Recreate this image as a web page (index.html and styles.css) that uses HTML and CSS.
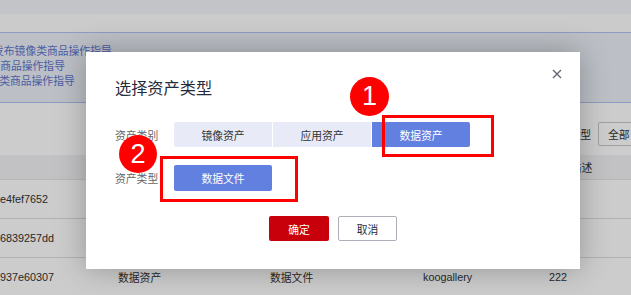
FILE: index.html
```html
<!DOCTYPE html>
<html lang="zh-CN">
<head>
  <meta charset="UTF-8" />
  <meta name="viewport" content="width=device-width, initial-scale=1.0" />
  <title>选择资产类型</title>
  <link rel="stylesheet" href="styles.css">
</head>
<body>
  <div class="page">
    <div class="topbar"></div>
    <div class="crumb"></div>

    <div class="notice">
      <p class="notice-line first">发布镜像类商品操作指导</p>
      <p class="notice-line second">发布应用商品操作指导</p>
      <p class="notice-line third">发布数据类商品操作指导</p>
    </div>

    <div class="filter">
      <span class="filter-label">资产类型</span>
      <span class="filter-select">全部</span>
    </div>

    <div class="grid">
      <div class="grid-row head">
        <span></span><span>资产类别</span><span>资产类型</span><span>发布者</span><span>资产描述</span>
      </div>
      <div class="grid-row">
        <span>e4fef7652</span><span>数据资产</span><span>数据文件</span><span>koogallery</span><span>111</span>
      </div>
      <div class="grid-row">
        <span>6839257dd</span><span>数据资产</span><span>数据文件</span><span>koogallery</span><span>xxxxy</span>
      </div>
      <div class="grid-row">
        <span>937e60307</span><span>数据资产</span><span>数据文件</span><span>koogallery</span><span>222</span>
      </div>
    </div>
  </div>

  <div class="mask"></div>

  <div class="dialog">
    <h2 class="dialog-title">选择资产类型</h2>
    <span class="dialog-close">
      <svg width="10" height="10" viewBox="0 0 10 10"><path d="M1 1L9 9M9 1L1 9" stroke="#5e6370" stroke-width="1.3" fill="none"/></svg>
    </span>

    <div class="field-row">
      <span class="field-label">资产类别</span>
      <div class="seg">
        <span class="seg-item">镜像资产</span>
        <span class="seg-item">应用资产</span>
        <span class="seg-item active">数据资产</span>
      </div>
    </div>

    <div class="field-row second-row">
      <span class="field-label">资产类型</span>
      <div class="seg">
        <span class="seg-item active tall">数据文件</span>
      </div>
    </div>

    <div class="dialog-footer">
      <button class="btn btn-ok">确定</button>
      <button class="btn btn-cancel">取消</button>
    </div>
  </div>

  <!-- annotations drawn over the screenshot -->
  <span class="mark-circle one">1</span>
  <span class="mark-box one"></span>
  <span class="mark-circle two">2</span>
  <span class="mark-box two"></span>
</body>
</html>
```

FILE: styles.css
```css
* {
  box-sizing: border-box;
}

body {
  margin: 0;
  width: 631px;
  height: 295px;
  overflow: hidden;
  position: relative;
  font-family: 'Liberation Sans', 'Noto Sans CJK SC', sans-serif;
  font-size: 10.8px;
  color: #333;
  background: #fff;
}

.page {
  width: 631px;
}

.topbar {
  height: 14px;
  background: #f4f5f9;
}

.crumb {
  height: 18px;
  background: #fefefe;
}

.notice {
  height: 71px;
  background: #ebf0f8;
  border-top: 1px solid #b3c2f2;
  border-bottom: 1px solid #b3c2f2;
  padding-top: 11px;
}

.notice-line {
  margin: 0;
  line-height: 15px;
  color: #6074cc;
  white-space: nowrap;
}

.notice-line.first {
  margin-left: -7px;
}

.notice-line.second {
  margin-left: -43px;
}

.notice-line.third {
  margin-left: -44px;
}

.filter {
  height: 52px;
  display: flex;
  align-items: center;
  justify-content: flex-end;
  padding-top: 10px;
  gap: 7px;
}

.filter-label {
  color: #333;
}

.filter-select {
  width: 80px;
  height: 24px;
  margin-right: -47px;
  border: 1px solid #c8c8c8;
  border-radius: 2px;
  display: flex;
  align-items: center;
  padding-left: 9px;
}

.grid-row {
  display: grid;
  grid-template-columns: 118px 152px 153px 126px 1fr;
  align-items: center;
  height: 39px;
  border-bottom: 1px solid #dedede;
  white-space: nowrap;
}

.grid-row.head {
  height: 25px;
  background: #f3f3f5;
  border-bottom: 1px solid #e4e4e4;
}

.mask {
  position: absolute;
  inset: 0;
  background: rgba(0, 0, 0, 0.2);
}

.dialog {
  position: absolute;
  left: 86px;
  top: 52px;
  width: 494px;
  height: 217px;
  background: #fff;
  box-shadow: 0 0 28px rgba(0, 0, 0, 0.28);
  padding: 26px 29px 0;
}

.dialog-title {
  margin: 0;
  font-size: 16.2px;
  line-height: 20px;
  font-weight: normal;
  color: #252b3a;
}

.dialog-close {
  position: absolute;
  right: 18px;
  top: 17px;
  width: 10px;
  height: 10px;
  display: flex;
}

.field-row {
  display: flex;
  align-items: center;
  margin-top: 24px;
}

.field-row.second-row {
  margin-top: 18px;
}

.field-label {
  width: 59px;
  color: #666;
}

.seg {
  display: flex;
  gap: 1px;
}

.seg-item {
  width: 98px;
  height: 25px;
  display: flex;
  align-items: center;
  justify-content: center;
  background: #e8ebf7;
  color: #333;
}

.seg-item:first-child {
  border-radius: 2px 0 0 2px;
}

.seg-item:last-child {
  border-radius: 0 2px 2px 0;
}

.seg-item.active {
  background: #6180e0;
  color: #fff;
}

.seg-item.tall {
  height: 26px;
  border-radius: 2px;
}

.dialog-footer {
  display: flex;
  justify-content: center;
  gap: 9px;
  margin-top: 25px;
}

.btn {
  width: 60px;
  height: 25px;
  border-radius: 2px;
  font-family: inherit;
  font-size: 10.8px;
  padding: 0;
  cursor: pointer;
}

.btn-ok {
  background: #c7000b;
  border: none;
  color: #fff;
}

.btn-cancel {
  width: 59px;
  background: #fff;
  border: 1px solid #adb0b8;
  color: #252b3a;
}

.mark-circle {
  position: absolute;
  border-radius: 50%;
  background: #f00;
  color: #fff;
  font-family: 'Liberation Sans', sans-serif;
  font-size: 27px;
  display: flex;
  align-items: center;
  justify-content: center;
}

.mark-circle.one {
  left: 350px;
  top: 77px;
  width: 39px;
  height: 39px;
}

.mark-circle.two {
  left: 119px;
  top: 135px;
  width: 38px;
  height: 38px;
}

.mark-box {
  position: absolute;
  border: 3px solid #f00;
}

.mark-box.one {
  left: 382px;
  top: 115px;
  width: 112px;
  height: 42px;
}

.mark-box.two {
  left: 160px;
  top: 156px;
  width: 138px;
  height: 46px;
}
```
